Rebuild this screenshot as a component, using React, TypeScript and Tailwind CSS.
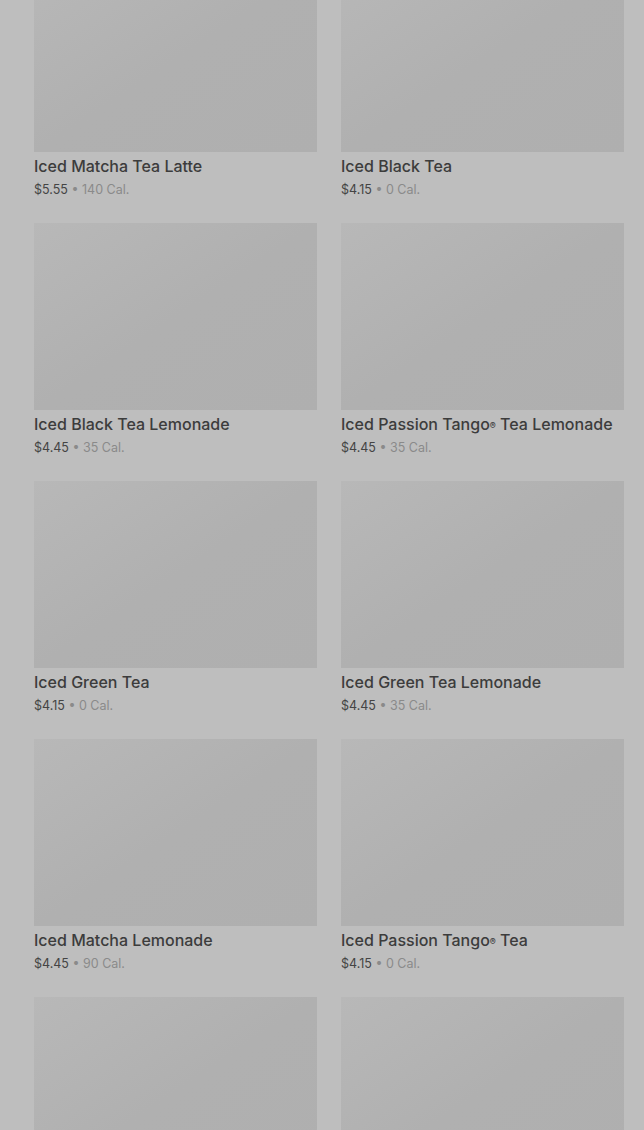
import React from "react";

type Drink = { name: string; price: string; cal: string };

const drinks: Drink[] = [
  { name: "Iced Matcha Tea Latte", price: "$5.55", cal: "140 Cal." },
  { name: "Iced Black Tea", price: "$4.15", cal: "0 Cal." },
  { name: "Iced Black Tea Lemonade", price: "$4.45", cal: "35 Cal." },
  { name: "Iced Passion Tango® Tea Lemonade", price: "$4.45", cal: "35 Cal." },
  { name: "Iced Green Tea", price: "$4.15", cal: "0 Cal." },
  { name: "Iced Green Tea Lemonade", price: "$4.45", cal: "35 Cal." },
  { name: "Iced Matcha Lemonade", price: "$4.45", cal: "90 Cal." },
  { name: "Iced Passion Tango® Tea", price: "$4.15", cal: "0 Cal." },
  { name: "", price: "", cal: "" },
  { name: "", price: "", cal: "" },
];

// puts the ® mark up small, like the menu does
const Name = ({ text }: { text: string }) => {
  const parts = text.split("®");
  return (
    <>
      {parts.map((p, i) => (
        <React.Fragment key={i}>
          {p}
          {i < parts.length - 1 && (
            <sup className="relative -top-[1px] text-[9px]">®</sup>
          )}
        </React.Fragment>
      ))}
    </>
  );
};

const DrinkCard = ({ drink }: { drink: Drink }) => {
  return (
    <div className="flex flex-col">
      {/* image placeholder */}
      <div className="h-[187px] w-full bg-linear-to-br from-[#b8b8b8] via-[#b0b0b0] to-[#afafaf]"></div>
      {drink.name && (
        <>
          <div className="mt-1 text-[16px] leading-[21px] font-medium text-[#3c3c3c]">
            <Name text={drink.name} />
          </div>
          <div className="mt-[3px] text-[12.5px] leading-[19px] text-[#8a8a8a]">
            <span className="text-[#444444]">{drink.price}</span> • {drink.cal}
          </div>
        </>
      )}
    </div>
  );
};

const App = () => {
  return (
    <div
      className="h-[1130px] w-full overflow-hidden bg-[#bebebe]"
      style={{ fontFamily: "Inter, Roboto, 'Liberation Sans', sans-serif" }}
    >
      <div className="-mt-[35px] grid grid-cols-2 gap-x-6 gap-y-6 pl-[34px] pr-5">
        {drinks.map((d, i) => (
          <DrinkCard key={i} drink={d} />
        ))}
      </div>
    </div>
  );
};

export default App;
